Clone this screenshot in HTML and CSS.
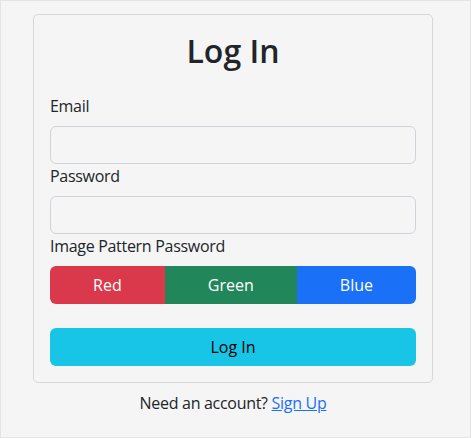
FILE: index.html
```html
<!DOCTYPE html>
<html lang="en">
<head>
<meta charset="utf-8">
<title>Log In</title>
<link rel="stylesheet" href="styles.css">
</head>
<body>
<div class="page">
  <div class="card">
    <h2 class="title">Log In</h2>
    <form class="form">
      <label class="label" for="email">Email</label>
      <input class="input" id="email" type="email">
      <label class="label" for="password">Password</label>
      <input class="input" id="password" type="password">
      <label class="label">Image Pattern Password</label>
      <div class="group">
        <button type="button" class="btn btn-red">Red</button>
        <button type="button" class="btn btn-green">Green</button>
        <button type="button" class="btn btn-blue">Blue</button>
      </div>
      <button type="submit" class="btn btn-submit">Log In</button>
    </form>
  </div>
  <p class="footer">Need an account? <a href="#" class="link">Sign Up</a></p>
</div>
</body>
</html>
```
FILE: styles.css
```css
* { box-sizing: border-box; }
html, body { margin: 0; padding: 0; }
body {
  background: #f5f5f5;
  color: #212529;
  font-family: "Open Sans", "Noto Sans", sans-serif;
  font-size: 16px;
  line-height: 24px;
  letter-spacing: -0.3px;
  min-height: 100vh;
  border: 1px solid #e4e4e4;
}
.page {
  width: 400px;
  margin-left: 32px;
  padding-top: 13px;
}
.card {
  border: 1px solid #d8d8d8;
  border-radius: 5px;
  padding: 16px;
}
.title {
  margin: 0 0 24px;
  text-align: center;
  font-size: 32px;
  line-height: 39px;
  font-weight: 600;
  letter-spacing: 0;
}
.form { display: flex; flex-direction: column; }
.label { display: block; margin-bottom: 8px; }
.input {
  height: 38px;
  border: 1px solid #ced4da;
  border-radius: 6px;
  background: transparent;
  font: inherit;
  padding: 6px 12px;
}
.group { display: flex; }
.btn {
  height: 38px;
  border: 0;
  font: inherit;
  border-radius: 6px;
  cursor: pointer;
  padding: 6px 12px;
}
.group .btn { flex: 1 1 auto; color: #fff; border-radius: 0; }
.group .btn:first-child { border-radius: 6px 0 0 6px; }
.group .btn:last-child { border-radius: 0 6px 6px 0; }
.btn-red { background: #d9394a; }
.btn-green { background: #21875a; }
.btn-blue { background: #1a70f6; }
.btn-submit {
  margin-top: 24px;
  background: #19c5e7;
  color: #000;
}
.footer {
  margin: 8px 0 0;
  text-align: center;
}
.link { color: #1a70f6; }
```
